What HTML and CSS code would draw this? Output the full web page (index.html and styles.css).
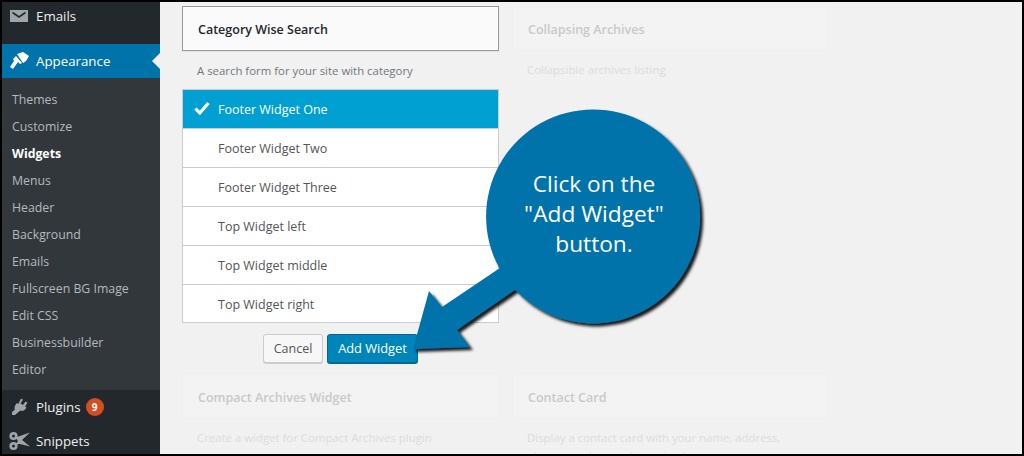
FILE: index.html
```html
<!DOCTYPE html>
<html>
  <head>
    <title>Widgets</title>
    <meta name="viewport" content="width=device-width, initial-scale=1" />
    <link rel="stylesheet" href="styles.css">
  </head>
  <body>
    <div class="frame">
      <nav class="sidebar">
        <a class="menu-item emails">
          <svg class="menu-icon" width="20" height="20" viewBox="0 0 20 20"><path d="M1 4h18v12H1z" fill="#a0a5aa"/><path d="M3.500 6.500 10 11l6.500-4.500" fill="none" stroke="#23282d" stroke-width="1.600"/></svg>
          <span>Emails</span>
        </a>
        <a class="menu-item current">
          <svg class="menu-icon" width="20" height="20" viewBox="0 0 20 20"><path d="M8 3 14 1 20 5 17 10 14 12z" fill="#fff"/><path d="M7 5 13 12 11 13 9 11 4 18 1 16 5 10 4 8z" fill="#fff"/></svg>
          <span>Appearance</span>
        </a>
        <div class="submenu">
          <a>Themes</a>
          <a>Customize</a>
          <a class="active">Widgets</a>
          <a>Menus</a>
          <a>Header</a>
          <a>Background</a>
          <a>Emails</a>
          <a>Fullscreen BG Image</a>
          <a>Edit CSS</a>
          <a>Businessbuilder</a>
          <a>Editor</a>
        </div>
        <a class="menu-item plugins">
          <svg class="menu-icon" width="20" height="20" viewBox="0 0 20 20"><path d="M12 1.500l2 1.200-2.500 3.600 2.500 1.700 2.500-3.600 2 1.300-2.500 3.700 1.500 1-1 1.500c-1.300 1.800-3.300 2.400-5.200 1.700L6 18H3v-3l2.800-2.300c-.6-1.800-.2-3.700 1-5.200l1-1.500 1.500 1z" fill="#a0a5aa"/></svg>
          <span>Plugins</span>
          <b class="badge">9</b>
        </a>
        <a class="menu-item snippets">
          <svg class="menu-icon" width="22" height="20" viewBox="0 0 22 20"><g fill="none" stroke="#a0a5aa" stroke-width="2.600"><circle cx="4.500" cy="5" r="2.800"/><circle cx="4.500" cy="15" r="2.800"/></g><path d="M6.500 6.500 21 1.500 13 9 21 15.500 11 13 6.500 13.500 9 10z" fill="#a0a5aa"/></svg>
          <span>Snippets</span>
        </a>
      </nav>

      <main class="content">
        <div class="widget-col">
          <div class="widget open">
            <h3 class="widget-title">Category Wise Search</h3>
            <p class="widget-desc">A search form for your site with category</p>
            <ul class="areas">
              <li class="selected">
                <svg class="check" width="16" height="14" viewBox="0 0 16 14"><path d="M1.500 7.500 5.800 12 14.500 2" fill="none" stroke="#fff" stroke-width="3.200"/></svg>
                Footer Widget One
              </li>
              <li>Footer Widget Two</li>
              <li>Footer Widget Three</li>
              <li>Top Widget left</li>
              <li>Top Widget middle</li>
              <li>Top Widget right</li>
            </ul>
            <div class="actions">
              <button type="button" class="btn cancel">Cancel</button>
              <button type="button" class="btn primary">Add Widget</button>
            </div>
          </div>
          <div class="widget faded compact">
            <h3 class="widget-title">Compact Archives Widget</h3>
            <p class="widget-desc">Create a widget for Compact Archives plugin</p>
          </div>
        </div>

        <div class="widget-col second">
          <div class="widget faded">
            <h3 class="widget-title">Collapsing Archives</h3>
            <p class="widget-desc">Collapsible archives listing</p>
          </div>
          <div class="widget faded contact">
            <h3 class="widget-title">Contact Card</h3>
            <p class="widget-desc">Display a contact card with your name, address, phone number, and opening hours.</p>
          </div>
        </div>
      </main>

      <!-- callout drawn over the page -->
      <svg class="callout-art" width="1024" height="456" viewBox="0 0 1024 456">
        <defs>
          <filter id="drop" x="-20%" y="-20%" width="140%" height="140%">
            <feDropShadow dx="3" dy="3" stdDeviation="1.500" flood-color="#000" flood-opacity="0.9"/>
          </filter>
        </defs>
        <path filter="url(#drop)" fill="#0073aa" d="M499.500 268.300A107 107 0 1 1 515.200 289.800L457 330 470 347 413 349 429 291 442 307z"/>
      </svg>
      <div class="callout-text">Click on the<br>"Add Widget"<br>button.</div>
    </div>
  </body>
</html>
```

FILE: styles.css
```css
* {
  box-sizing: border-box;
}

html, body {
  margin: 0;
  height: 100%;
}

body {
  font-family: 'Open Sans', sans-serif;
  font-size: 12.5px;
  background-color: #f1f1f1;
  overflow: hidden;
}

.frame {
  position: relative;
  display: flex;
  width: 1024px;
  height: 456px;
  border: 2px solid #000;
  overflow: hidden;
  background-color: #f1f1f1;
}

.sidebar {
  flex: none;
  width: 158px;
  background-color: #23282d;
  color: #eee;
  font-size: 13.3px;
}

.menu-item {
  display: flex;
  align-items: center;
  height: 34px;
  color: #eee;
  position: relative;
}

.menu-item span {
  margin-left: 34px;
}

.menu-icon {
  position: absolute;
  left: 7px;
  top: 7px;
}

.emails {
  height: 42px;
  padding-bottom: 14px;
}

.emails .menu-icon {
  top: 4px;
}

.current {
  background-color: #0073aa;
  color: #fff;
}

.current::after {
  content: '';
  position: absolute;
  right: 0;
  top: 9px;
  border: 8px solid transparent;
  border-right-color: #f1f1f1;
  border-left: none;
}

.submenu {
  background-color: #32373c;
  padding: 8px 0 7px;
  font-size: 12.3px;
  color: #b4b9be;
}

.submenu a {
  display: block;
  height: 27px;
  line-height: 27px;
  padding-left: 10px;
}

.submenu a.active {
  color: #fff;
  font-weight: 700;
}

.badge {
  display: inline-block;
  width: 18px;
  height: 18px;
  margin-left: 5px;
  border-radius: 50%;
  background-color: #d54e21;
  color: #fff;
  font-size: 10px;
  font-weight: 700;
  line-height: 18px;
  text-align: center;
}

.content {
  display: flex;
  gap: 13px;
  padding-left: 22px;
  height: 100%;
  overflow: hidden;
}

.widget-col {
  width: 317px;
  flex: none;
}

.widget-col.second {
  width: 316px;
}

.widget-title {
  margin: 4px 0 0;
  height: 45px;
  padding-left: 15px;
  background-color: #fafafa;
  border: 1px solid #999;
  box-shadow: 0 1px 1px rgba(0, 0, 0, 0.05);
  color: #23282d;
  font-size: 12.5px;
  font-weight: 600;
  line-height: 46px;
}

.widget-desc {
  margin: 0;
  padding: 11px 15px 0;
  color: #72777c;
  font-size: 11.4px;
  line-height: 18px;
  height: 38px;
}

.areas {
  list-style: none;
  margin: 0;
  padding: 0;
  background-color: #fff;
  border: 1px solid #ccc;
}

.areas li {
  position: relative;
  height: 39px;
  line-height: 40px;
  padding-left: 35px;
  color: #555;
  border-bottom: 1px solid #ccc;
}

.areas li:last-child {
  height: 37px;
  border-bottom: none;
}

.areas li.selected {
  background-color: #00a0d2;
  color: #fff;
}

.check {
  position: absolute;
  left: 11px;
  top: 11px;
}

.actions {
  display: flex;
  justify-content: flex-end;
  gap: 4px;
  margin-top: 11px;
  padding-right: 81px;
}

.btn {
  height: 29px;
  padding: 0;
  border: 1px solid #ccc;
  border-radius: 3px;
  background-color: #f7f7f7;
  box-shadow: 0 1px 0 #ccc;
  color: #555;
  font-family: inherit;
  font-size: 12.5px;
}

.btn.cancel {
  width: 60px;
}

.btn.primary {
  width: 91px;
  padding-bottom: 2px;
  background-color: #0085ba;
  border-color: #006799;
  box-shadow: 0 1px 0 #006799;
  color: #fff;
  font-size: 12.8px;
}

.faded .widget-title {
  height: 44px;
  background-color: #f3f3f3;
  border-color: #efefef;
  color: #c9c9c9;
  box-shadow: none;
}

.faded .widget-desc {
  color: #dcdcdc;
}

.compact {
  margin-top: 11px;
}

.contact {
  margin-top: 286px;
}

.callout-art {
  position: absolute;
  left: -2px;
  top: -2px;
}

.callout-text {
  position: absolute;
  left: 484px;
  top: 167px;
  width: 216px;
  text-align: center;
  color: #fff;
  font-size: 22.7px;
  line-height: 30px;
}
```
